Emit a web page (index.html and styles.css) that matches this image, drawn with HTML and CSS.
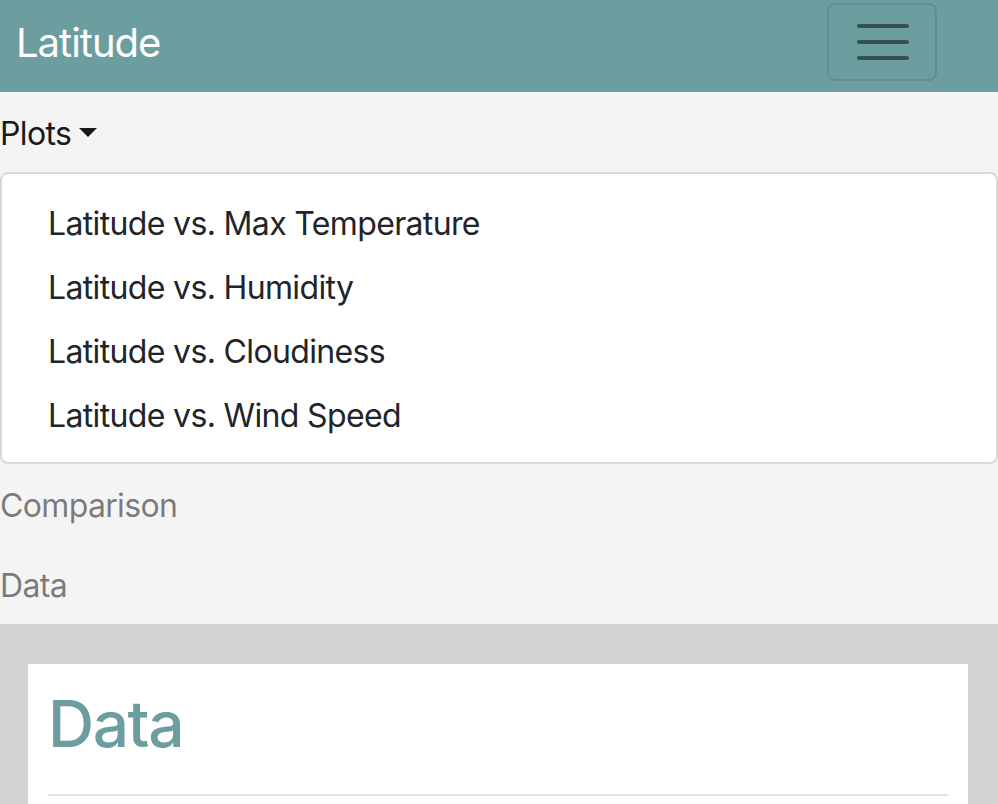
FILE: index.html
```html
<!DOCTYPE html>
<html lang="en">
<head>
<meta charset="utf-8">
<title>Latitude</title>
<link rel="stylesheet" href="styles.css">
</head>
<body>
<header class="navbar">
  <a class="brand" href="#">Latitude</a>
  <button class="toggler" type="button" aria-label="Toggle navigation">
    <svg width="60" height="60" viewBox="0 0 60 60" aria-hidden="true">
      <path d="M7 14H55M7 30H55M7 46H55" stroke="rgba(0,0,0,0.5)" stroke-width="4" stroke-linecap="round" fill="none"/>
    </svg>
  </button>
</header>
<nav class="nav">
  <div class="nav-item">
    <a class="nav-link active" href="#">Plots<span class="caret"></span></a>
    <div class="menu">
      <a class="menu-item" href="#">Latitude vs. Max Temperature</a>
      <a class="menu-item" href="#">Latitude vs. Humidity</a>
      <a class="menu-item" href="#">Latitude vs. Cloudiness</a>
      <a class="menu-item" href="#">Latitude vs. Wind Speed</a>
    </div>
  </div>
  <a class="nav-link" href="#">Comparison</a>
  <a class="nav-link" href="#">Data</a>
</nav>
<main class="main">
  <section class="card">
    <h2 class="title">Data</h2>
    <hr class="rule">
  </section>
</main>
</body>
</html>
```

FILE: styles.css
```css
* { box-sizing: border-box; }
html, body { margin: 0; padding: 0; }
body {
  font-family: Inter, "Noto Sans", "Liberation Sans", sans-serif;
  font-size: 32px;
  line-height: 1.5;
  letter-spacing: -0.65px;
  color: #212529;
  background: #d3d3d3;
}
a { text-decoration: none; color: inherit; }

.navbar {
  height: 92px;
  background: #6d9e9f;
  display: flex;
  align-items: flex-start;
  justify-content: space-between;
  padding: 0 61px 0 16px;
}
.brand {
  color: #fff;
  font-size: 40px;
  line-height: 48px;
  letter-spacing: -1px;
  margin-top: 19px;
}
.toggler {
  margin-top: 3px;
  width: 110px;
  height: 78px;
  border: 2px solid rgba(0,0,0,0.1);
  border-radius: 8px;
  background: transparent;
  padding: 0;
  display: flex;
  align-items: center;
  justify-content: center;
}
.toggler svg { display: block; margin-left: -1px; }

.nav {
  background: #f4f4f4;
  display: flex;
  flex-direction: column;
}
.nav-link {
  display: block;
  padding: 18px 0 14px;
  line-height: 48px;
  color: rgba(0,0,0,0.5);
}
.nav-link.active { color: #1a1a1a; }
.caret {
  display: inline-block;
  margin-left: 8px;
  vertical-align: 8px;
  border-top: 9px solid currentColor;
  border-left: 9px solid transparent;
  border-right: 9px solid transparent;
}
.menu {
  background: #fff;
  border: 2px solid rgba(0,0,0,0.15);
  border-radius: 8px;
  padding: 16px 0;
  display: flex;
  flex-direction: column;
}
.menu-item {
  padding: 10px 46px 6px;
  line-height: 48px;
  color: #212529;
}

.main {
  padding: 40px 30px 0 28px;
}
.card {
  background: #fff;
  padding: 22px 20px 40px 20px;
}
.title {
  margin: 0 0 31px;
  font-size: 64px;
  font-weight: 500;
  line-height: 1.2;
  letter-spacing: -1.5px;
  color: #6d9e9f;
}
.rule {
  margin: 0;
  border: 0;
  border-top: 2px solid #e2e2e2;
}
```
